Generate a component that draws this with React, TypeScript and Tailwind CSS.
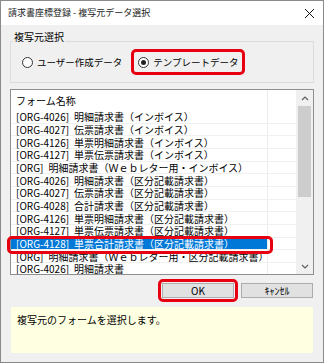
import React from "react";

const rows = [
  "[ORG-4026]\u2002明細請求書（インボイス）",
  "[ORG-4027]\u2002伝票請求書（インボイス）",
  "[ORG-4126]\u2002単票明細請求書（インボイス）",
  "[ORG-4127]\u2002単票伝票請求書（インボイス）",
  "[ORG]\u2002明細請求書（Ｗｅｂレター用・インボイス）",
  "[ORG-4026]\u2002明細請求書（区分記載請求書）",
  "[ORG-4027]\u2002伝票請求書（区分記載請求書）",
  "[ORG-4028]\u2002合計請求書（区分記載請求書）",
  "[ORG-4126]\u2002単票明細請求書（区分記載請求書）",
  "[ORG-4127]\u2002単票伝票請求書（区分記載請求書）",
  "[ORG-4128]\u2002単票合計請求書（区分記載請求書）",
  "[ORG]\u2002明細請求書（Ｗｅｂレター用・区分記載請求書）",
  "[ORG-4026]\u2002明細請求書",
];
const selected = 10;

const Radio: React.FC<{ checked?: boolean; label: string }> = ({ checked, label }) => (
  <div className="flex items-center whitespace-nowrap">
    <span className="flex items-center justify-center w-[11px] h-[11px] rounded-full border border-[#333] bg-white shrink-0">
      {checked && <span className="w-[5px] h-[5px] rounded-full bg-[#222]" />}
    </span>
    <span className="ml-[4px] text-[9.5px] leading-[12px]">{label}</span>
  </div>
);

const Chevron: React.FC<{ up?: boolean }> = ({ up }) => (
  <svg width="8" height="5" viewBox="0 0 8 5">
    <polyline
      points={up ? "1,4 4,1 7,4" : "1,1 4,4 7,1"}
      fill="none"
      stroke="#606060"
      strokeWidth="1.2"
    />
  </svg>
);

export default function App() {
  return (
    <div
      className="w-[324px] h-[364px] bg-white text-black text-[10px]"
      style={{ fontFamily: '"Noto Sans CJK JP", "Noto Sans", sans-serif' }}
    >
      <div className="w-[324px] h-[363px] border border-[#8a8a8a] bg-[#f0f0f0] flex flex-col">
        {/* title bar */}
        <div className="h-[24px] bg-white flex items-center justify-between pl-[7px] pr-[8px]">
          <span className="text-[9px] text-[#222] leading-[12px] whitespace-nowrap">請求書座標登録 - 複写元データ選択</span>
          <svg width="11" height="11" viewBox="0 0 11 11">
            <path d="M1 1 L10 10 M10 1 L1 10" stroke="#111" strokeWidth="1" />
          </svg>
        </div>

        <div className="flex flex-col px-[9px] pt-[16px]">
          {/* group box */}
          <div className="relative h-[42px] border border-[#dcdcdc] flex items-center pl-[11px]">
            <span className="absolute left-[2px] top-[-11px] px-[1px] bg-[#f0f0f0] leading-[12px] whitespace-nowrap">
              複写元選択
            </span>
            <Radio label="ユーザー作成データ" />
            <div className="ml-[9px] w-[114px] h-[26px] border-[3px] border-[#e60012] rounded-[5px] flex items-center pl-[4px]">
              <Radio checked label="テンプレートデータ" />
            </div>
          </div>

          {/* list */}
          <div className="relative mt-[6px] h-[186px] border border-[#8f8f8f] bg-white flex">
            <div className="flex-1 flex flex-col overflow-hidden">
              <div className="h-[21px] flex shrink-0">
                <div className="w-[257px] border-r border-[#ececec] pl-[5px] flex items-center leading-[12px]">
                  フォーム名称
                </div>
              </div>
              {rows.map((r, i) => (
                <div key={i} className="h-[12.67px] shrink-0 flex border-b border-[#f0f0f0]">
                  <div
                    className={
                      i === selected
                        ? "w-[257px] border-r border-[#ececec] pl-[5px] flex items-center leading-[11px] whitespace-nowrap bg-[#0078d7] text-white"
                        : "w-[257px] border-r border-[#ececec] pl-[5px] flex items-center leading-[11px] whitespace-nowrap"
                    }
                  >
                    {r}
                  </div>
                </div>
              ))}
            </div>
            <div className="w-[17px] bg-[#f0f0f0] flex flex-col items-center">
              <div className="h-[16px] flex items-center justify-center">
                <Chevron up />
              </div>
              <div className="w-[13px] h-[91px] bg-[#cdcdcd]" />
              <div className="flex-1" />
              <div className="h-[16px] flex items-center justify-center">
                <Chevron />
              </div>
            </div>
            <div className="absolute left-[-4px] top-[146px] w-[266px] h-[18px] border-[3px] border-[#e60012] rounded-[5px]" />
          </div>

          {/* buttons */}
          <div className="mt-[4px] flex justify-end items-center pr-[1px]">
            <div className="border-[3px] border-[#e60012] rounded-[5px] p-[1px]">
              <button className="w-[72px] h-[15px] bg-[#e1e1e1] border border-[#adadad] flex items-center justify-center leading-[12px]">
                OK
              </button>
            </div>
            <button className="ml-[3px] w-[72px] h-[15px] bg-[#e1e1e1] border border-[#adadad] flex items-center justify-center leading-[12px]">
              ｷｬﾝｾﾙ
            </button>
          </div>

          {/* message */}
          <div className="mt-[5px] mx-[1px] h-[46px] bg-[#ffffe1] px-[6px] pt-[7px] leading-[12px]">
            複写元のフォームを選択します。
          </div>
        </div>
      </div>
    </div>
  );
}
